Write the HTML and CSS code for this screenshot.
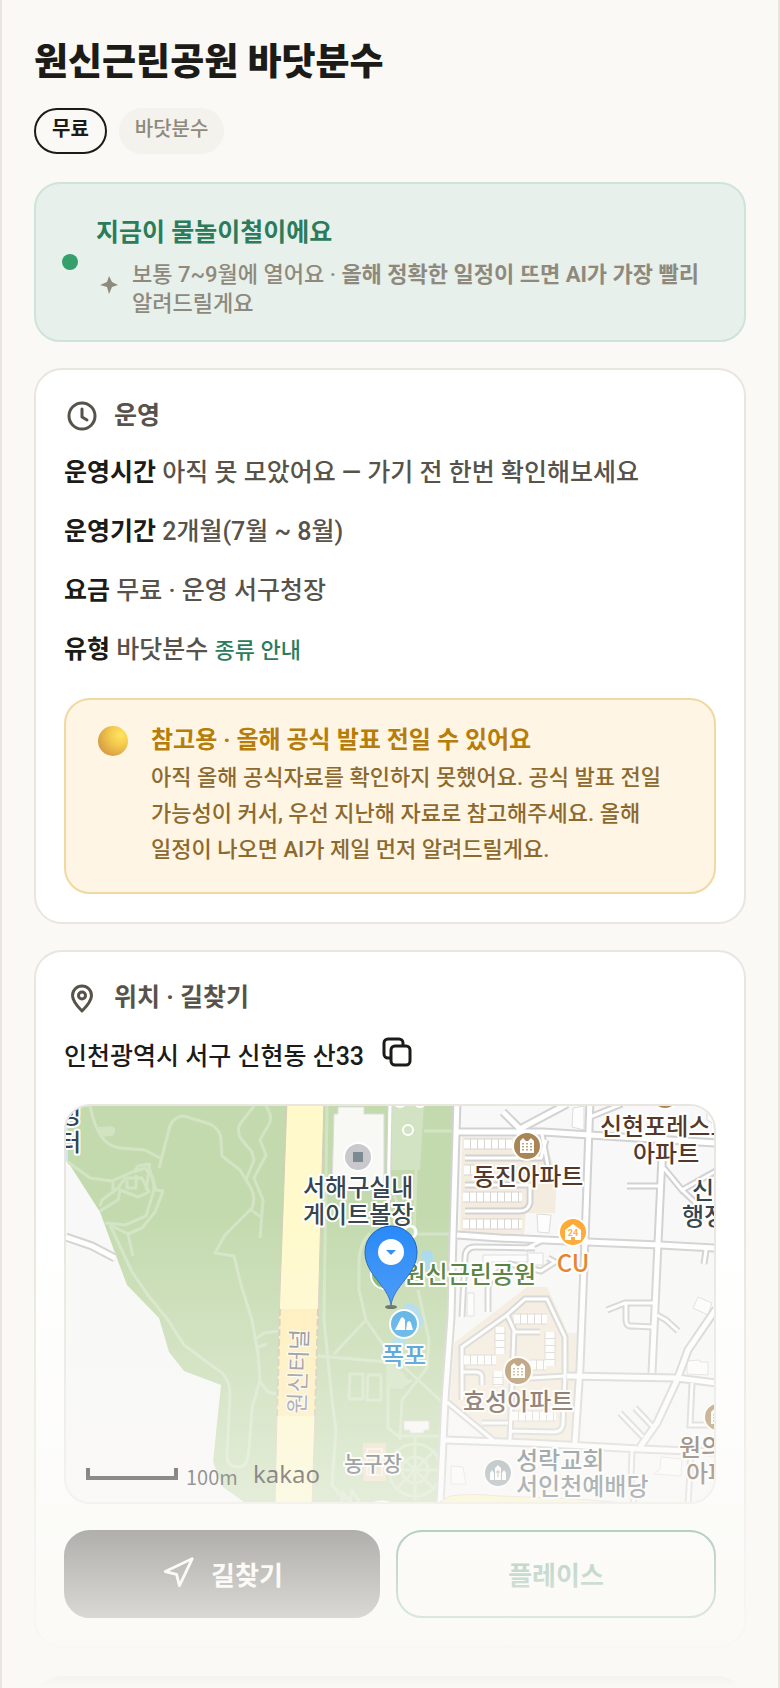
FILE: index.html
```html
<!DOCTYPE html>
<html lang="ko">
<head>
    <meta charset="UTF-8">
    <meta name="viewport" content="width=device-width, initial-scale=1.0">
    <title>원신근린공원 바닷분수</title>
    <link rel="stylesheet" href="styles.css">
</head>
<body>
    <main class="page">
        <h1 class="place-name">원신근린공원 바닷분수</h1>
        <div class="tags">
            <span class="tag tag-free">무료</span>
            <span class="tag">바닷분수</span>
        </div>

        <!-- Season notice -->
        <section class="season">
            <span class="dot"></span>
            <div class="season-body">
                <p class="season-title">지금이 물놀이철이에요</p>
                <div class="season-note">
                    <svg class="spark" viewBox="0 0 26 26"><path d="M13 4l3 6 6 3-6 2-3 7-2-7-7-2 7-3z"/></svg>
                    <p>보통 7~9월에 열어요 · <b>올해 정확한 일정이 뜨면 AI가 가장 빨리</b> 알려드릴게요</p>
                </div>
            </div>
        </section>

        <!-- Operation info -->
        <section class="card">
            <h2 class="card-title">
                <svg class="icon" viewBox="0 0 36 36"><circle cx="18" cy="18" r="13"/><path d="M18 11v8l5 3"/></svg>
                운영
            </h2>
            <div class="info">
                <p><b>운영시간</b> 아직 못 모았어요 — 가기 전 한번 확인해보세요</p>
                <p><b>운영기간</b> 2개월(7월 ~ 8월)</p>
                <p><b>요금</b> 무료 · 운영 서구청장</p>
                <p><b>유형</b> 바닷분수 <a href="#">종류 안내</a></p>
            </div>
            <div class="callout">
                <span class="ball"></span>
                <div>
                    <p class="callout-title">참고용 · 올해 공식 발표 전일 수 있어요</p>
                    <p class="callout-text">아직 올해 공식자료를 확인하지 못했어요. 공식 발표 전일 가능성이 커서, 우선 지난해 자료로 참고해주세요. 올해 일정이 나오면 AI가 제일 먼저 알려드릴게요.</p>
                </div>
            </div>
        </section>

        <!-- Location -->
        <section class="card">
            <h2 class="card-title">
                <svg class="icon" viewBox="0 0 36 36"><path d="M18 31C12 25 8.500 20.500 8.500 15.500a9.500 9.500 0 0 1 19 0C27.500 20.500 24 25 18 31z"/><circle cx="18" cy="15.500" r="3.500"/></svg>
                위치 · 길찾기
            </h2>
            <div class="address">
                <span>인천광역시 서구 신현동 산33</span>
                <button class="copy" type="button" aria-label="주소 복사">
                    <svg viewBox="0 0 30 30"><rect x="9" y="9" width="19" height="19" rx="4"/><path d="M9 21H6a4 4 0 0 1-4-4V6a4 4 0 0 1 4-4h11a4 4 0 0 1 4 4v3"/></svg>
                </button>
            </div>

            <div class="map">
                <svg viewBox="66 1106 648 396" preserveAspectRatio="xMidYMid slice">
                    <defs>
                        <g id="roads">
                            <path d="M457 1100L453 1235L451 1317L445 1400L440 1506"/>
                            <path d="M457 1132H543L590 1135L716 1143M457 1235L500 1238L587 1242L660 1245L716 1248"/>
                            <path d="M590 1100L585 1240L580 1367L575 1443M662 1157L658 1243L652 1373"/>
                            <path d="M567 1376L677 1378L716 1383M716 1309L688 1350L677 1380L657 1423L640 1447"/>
                            <path d="M445 1440L530 1443L640 1449L716 1452"/>
                            <path d="M503 1112L520 1129L567 1104"/>
                            <path d="M66 1237L92 1246L115 1258"/>
                        </g>
                        <g id="lanes">
                            <path d="M627 1186H660M663 1167L682 1190L716 1171M680 1188L703 1210M663 1140V1167M590 1117L622 1104"/>
                            <path d="M607 1310L625 1303H655M626 1303V1320Q626 1327 633 1326L653 1327M657 1315L666 1320L678 1331"/>
                            <path d="M620 1413L643 1437M635 1408L653 1427M632 1450L631 1480L634 1504M692 1383L690 1425H716M691 1450L688 1506M706 1250L704 1264"/>
                            <path d="M465 1158H541L546 1140M465 1185H530V1203Q528 1211 520 1211H465M542 1134L549 1172"/>
                            <path d="M535 1248L475 1247Q465 1247 465 1258L462 1317M541 1241L525 1249M488 1312V1290Q488 1282 494 1276L510 1264L541 1271L555 1262L548 1258"/>
                            <path d="M462 1400V1347L507 1315L525 1299H547L565 1337V1376L513 1379M507 1315L514 1330L510 1440M514 1332H540M462 1372H476Q482 1372 482 1378V1385M565 1376L563 1424Q562 1432 554 1432L511 1431M482 1423H508M447 1402L493 1440"/>
                        </g>
                        <g id="tower"><path d="M-7 7V-5L-4-8L-1-5H1L4-8L7-5V7z" fill="#fff"/><path d="M-4-3v9M0-3v9M4-3v9" stroke="currentColor" stroke-width="1.500" stroke-dasharray="1.500 1.500"/></g>
                    </defs>

                    <rect x="60" y="1100" width="660" height="410" fill="#f8f8f8"/>
                    <!-- park -->
                    <path fill="#cfe6f3" d="M60 1100h10v62h-10z"/>
                    <path fill="#c3daae" d="M68 1100H288L279 1320L275 1506H249L244 1502L223 1487L213 1462L221 1385L184 1371L169 1352L159 1318L127 1285L115 1253L100 1212L68 1162z"/>
                    <path fill="#c3daae" d="M324 1100H454L450 1317L443 1400L438 1506H312L318 1320z"/>
                    <path fill="#d1e3c2" d="M392 1104H424L420 1170H391z"/>
                    <g class="trail">
                        <path d="M90 1106Q98 1146 120 1148L145 1150L160 1158M159 1168L170 1126Q174 1116 184 1116L210 1124Q221 1130 221 1140L222 1156L240 1170L251 1188Q256 1198 252 1208L225 1235L215 1253L234 1256L241 1285L252 1320L258 1354L260 1380L252 1408L249 1450Q248 1467 238 1467Q227 1467 227 1455L230 1395Q230 1376 215 1368L184 1345L168 1320L148 1295L132 1272L110 1225"/>
                        <path d="M68 1162L90 1178L112 1181L130 1173L145 1168L153 1178L154 1190L146 1216L125 1225L105 1223"/>
                        <path d="M100 1206L102 1200L118 1188L125 1178L142 1178L149 1192L138 1197L120 1190L118 1200L100 1211M113 1181V1194M150 1163L146 1190M134 1172L138 1166L148 1164L156 1190L163 1191L155 1212L142 1228L128 1234L112 1226M128 1234L133 1256M127 1180V1188H136V1175"/>
                        <path d="M254 1106L240 1124Q236 1132 242 1140L252 1152L254 1160L246 1180M266 1106Q274 1118 268 1126L260 1140L266 1155L254 1178L263 1200L260 1238M251 1210L261 1217"/>
                        <path d="M254 1340L264 1333L278 1331M258 1347L267 1344M260 1382L268 1392L276 1394"/>
                        <path d="M327 1106L324 1320L332 1400L336 1430L332 1485L345 1500M424 1131H452M416 1170L414 1234H452M392 1190L402 1215M370 1233Q358 1245 359 1265V1290L366 1320L388 1352L442 1402M318 1356L388 1362M366 1320L334 1354M418 1290L429 1340L427 1368L402 1400L400 1440M388 1365V1428L398 1436H440M412 1380L398 1388"/>
                        <path d="M415 1436V1500M395 1450L435 1490M435 1450L395 1490M395 1470H440"/>
                        <circle cx="415" cy="1470" r="13"/><circle cx="415" cy="1470" r="26"/>
                        <path d="M341 1504L343 1492L350 1502L352 1490L360 1503"/>
                        <path d="M350 1374H363V1399H349zM368 1375H381V1400H367z"/>
                    </g>
                    <path fill="#d1e3c2" d="M98 1131q-3-5 4-4l8-1q6 1 5 6t-6 4l-8 1z"/>
                    <path fill="#cfe2c0" d="M388 1362L398 1367L409 1380L402 1389L386 1388z"/>
                    <path fill="#f8f8f5" stroke="#ddd" d="M334 1114H338V1107H364V1114H384V1190H332z"/>
                    <path fill="#f8f8f5" stroke="#ddd" d="M404 1421H429V1430H424V1433H410V1430H404z"/>
                    <path fill="#f0dcc0" d="M363 1443h23v38h-23z"/>
                    <path class="court" d="M367 1449h15v26h-15zM367 1462h15"/>
                    <path d="M390 1104L388 1210" stroke="#d5d5d5" stroke-width="5"/>
                    <path d="M390 1104L388 1210" stroke="#fff" stroke-width="3"/>
                    <g fill="#a6d8ec"><circle cx="427" cy="1256" r="6"/><path d="M422 1256l4 14 7-2v-12zM404 1306q8-6 14 2l6 14-6 8-20-16zM392 1340l12-4 2 10h-14z"/></g>
                    <g fill="none" stroke="#fff" stroke-width="2"><circle cx="408" cy="1130" r="5"/><circle cx="410" cy="1232" r="6" stroke-width="3"/><circle cx="400" cy="1101" r="6"/><circle cx="420" cy="1101" r="6"/></g>

                    <!-- tunnel road -->
                    <path fill="#fff9cb" stroke="#d6cbb8" d="M287 1100H324L318 1320L312 1506H275L279 1320z"/>
                    <path fill="#ffeeb5" d="M280 1309H318L315 1416H277z"/>
                    <path d="M280 1309L277 1416M318 1309L315 1416" stroke="#cfc6b4" stroke-width="2" stroke-dasharray="7 3"/>

                    <!-- apartment blocks -->
                    <path fill="#f4ecdf" d="M462 1137H544L557 1176L555 1213H526L524 1235H460z"/>
                    <path fill="#f4ebdc" d="M527 1287H547L568 1333H577L573 1443L512 1440H492L450 1405L454 1343z"/>
                    <g class="building">
                        <path d="M573 1108L584 1106V1130L572 1127zM537 1214L551 1215L549 1233L538 1232zM527 1253H543V1265H527zM698 1297L712 1303L708 1315L693 1308zM687 1361L700 1360V1362H708V1375L687 1374zM661 1457L682 1459L681 1476L654 1474L660 1469zM451 1466L463 1467L466 1484H451zM483 1255H528V1262H490V1275H483zM467 1293L474 1293V1316H467zM707 1106V1120L716 1125"/>
                    </g>
                    <use href="#lanes" class="lane-edge"/>
                    <use href="#roads" class="road-edge"/>
                    <use href="#lanes" class="lane-fill"/>
                    <use href="#roads" class="road-fill"/>
                    <g class="row-edge">
                        <path d="M464 1144H512M464 1170H486M463 1197H522M463 1224H522M514 1319H547M550 1332V1366M500 1327V1354M464 1360H496M530 1365H546M512 1416H556M498 1371V1386"/>
                    </g>
                    <g class="row-fill">
                        <path d="M464 1144H512M464 1170H486M463 1197H522M463 1224H522M514 1319H547M550 1332V1366M500 1327V1354M464 1360H496M530 1365H546M512 1416H556M498 1371V1386"/>
                    </g>
                    <path fill="#fdf6bd" stroke="#ddd6c8" d="M438 1503L450 1496Q470 1493 500 1496L577 1499L625 1503z"/>
                    <path fill="#fff" d="M370 1503Q382 1498 394 1503z"/>

                    <!-- place markers -->
                    <g class="poi">
                        <g transform="translate(358 1157)"><circle r="14" fill="#c9c8cd"/><path d="M-5-5h10v10H-5z" fill="#7c8a91"/></g>
                        <g transform="translate(527 1146)" color="#a98555"><circle r="14" fill="#a98555"/><use href="#tower"/></g>
                        <g transform="translate(518 1371)" color="#a98555"><circle r="14" fill="#a98555"/><use href="#tower"/></g>
                        <g transform="translate(718 1417)" color="#a98555"><circle r="14" fill="#a98555"/><use href="#tower"/></g>
                        <g transform="translate(665 1095)"><circle r="14" fill="#a98555"/></g>
                        <g transform="translate(573 1232)"><circle r="14" fill="#ffa931"/><path fill="#fff" d="M-8 8V-2L0-8L8-2V8H2V5H-2V8z"/><text y="4" class="poi-num">24</text></g>
                        <g transform="translate(385 1275)"><circle r="14" fill="#7eb35c"/></g>
                        <g transform="translate(404 1324)"><circle r="14" fill="#41a6e4"/><path fill="#fff" d="M-9 6L-3-6Q-1-8 1-4L1 6zM2 6L3-1Q5-5 7-1L9 6z"/></g>
                        <g transform="translate(498 1473)"><circle r="14" fill="#8b9aa1"/><path fill="#fff" d="M-8 7V0L-6-3L-4 0V7zM-3 7V-5L0-8L3-5V7zM4 7V0L6-3L8 0V7z"/><path d="M0-3V4M-2-1H2" stroke="#8b9aa1" stroke-width="1"/></g>
                    </g>

                    <g class="map-text">
                        <text x="81" y="1123" text-anchor="end">정</text>
                        <text x="81" y="1151" text-anchor="end">터</text>
                        <text x="303" y="1196">서해구실내</text>
                        <text x="303" y="1223">게이트볼장</text>
                        <text x="692" y="1199">신</text>
                        <text x="682" y="1225">행정</text>
                        <g fill="#54392b">
                            <text x="473" y="1185">동진아파트</text>
                            <text x="600" y="1135">신현포레스트</text>
                            <text x="633" y="1162">아파트</text>
                            <text x="463" y="1410">효성아파트</text>
                            <text x="679" y="1456">원의</text>
                            <text x="686" y="1482">아파</text>
                        </g>
                        <text x="573" y="1272" text-anchor="middle" fill="#e67817">CU</text>
                        <text x="536" y="1283" text-anchor="end" fill="#47742f">원신근린공원</text>
                        <text x="404" y="1364" text-anchor="middle" fill="#2389d0">폭포</text>
                        <text x="344" y="1471" class="small">농구장</text>
                        <g fill="#4a5b65">
                            <text x="516" y="1469">성락교회</text>
                            <text x="516" y="1495">서인천예배당</text>
                        </g>
                        <text transform="translate(305 1414) rotate(-88)" class="tunnel">원신터널</text>
                    </g>

                    <!-- pin -->
                    <ellipse cx="391" cy="1307" rx="6" ry="2" fill="#4d5a48"/>
                    <path fill="#2487f8" stroke="#1258bc" d="M391 1305C388 1285 365 1275 365 1252a26 26 0 0 1 52 0C417 1275 394 1285 391 1305z"/>
                    <circle cx="391" cy="1252" r="13" fill="#fff"/>
                    <path fill="#2487f8" d="M386 1250H396L391 1255z"/>

                    <path d="M88 1468V1478H176V1468" fill="none" stroke="#000" stroke-width="4"/>
                    <text x="186" y="1485" class="scale">100m</text>
                    <text x="253" y="1483" class="brand">kakao</text>
                </svg>
            </div>

            <div class="actions">
                <button class="btn btn-dark" type="button">
                    <svg viewBox="0 0 24 24"><path d="M3 11L22 2L13 21L11 13z"/></svg>
                    길찾기
                </button>
                <button class="btn btn-line" type="button">플레이스</button>
            </div>
        </section>

        <section class="more"></section>
        <div class="fade"></div>
    </main>
</body>
</html>
```

FILE: styles.css
```css
* {
    margin: 0;
    padding: 0;
    box-sizing: border-box;
}

body {
    font-family: Roboto, "Noto Sans CJK KR", sans-serif;
    background: #faf9f5;
    color: #1c1b17;
    word-break: keep-all;
}

.page {
    position: relative;
    display: flex;
    flex-direction: column;
    height: 100vh;
    overflow: hidden;
    padding: 36px 32px 0;
    border-left: 2px solid #e8e6df;
    border-right: 2px solid #e8e6df;
}

.page > * {
    flex-shrink: 0;
}

.place-name {
    font-size: 37px;
    line-height: 54px;
    font-weight: 800;
}

/* Tags */
.tags {
    display: flex;
    gap: 12px;
    margin-top: 18px;
}

.tag {
    height: 46px;
    padding: 6px 16px;
    border-radius: 23px;
    background: #f3f2ed;
    color: #8f897d;
    font-size: 20px;
    line-height: 30px;
    font-weight: 500;
}

.tag-free {
    padding: 4px 16px;
    border: 2px solid #1c1b17;
    background: none;
    color: #1c1b17;
    font-weight: 700;
}

/* Season notice */
.season {
    display: flex;
    align-items: center;
    gap: 18px;
    margin-top: 28px;
    padding: 26px 26px 22px;
    border: 2px solid #cfe4d8;
    border-radius: 26px;
    background: #e7f0ea;
}

.dot {
    width: 16px;
    height: 16px;
    margin-bottom: 4px;
    border-radius: 50%;
    background: #35a06c;
    flex-shrink: 0;
}

.season-title {
    font-size: 25px;
    line-height: 46px;
    font-weight: 700;
    color: #2c7c5b;
}

.season-note {
    display: flex;
    align-items: center;
    gap: 10px;
    margin-top: 4px;
    font-size: 22px;
    line-height: 29px;
    color: #8f897d;
}

.spark {
    width: 26px;
    height: 26px;
    margin-bottom: 8px;
    fill: #8f897d;
    flex-shrink: 0;
}

/* Cards */
.card {
    margin-top: 26px;
    padding: 28px;
    border: 2px solid #e8e6df;
    border-radius: 28px;
    background: #fff;
}

.card-title {
    display: flex;
    align-items: center;
    gap: 14px;
    font-size: 25px;
    line-height: 36px;
    font-weight: 700;
    color: #57534a;
}

.icon {
    width: 36px;
    height: 36px;
    fill: none;
    stroke: #57534a;
    stroke-width: 3;
    stroke-linecap: round;
    stroke-linejoin: round;
}

.info {
    display: flex;
    flex-direction: column;
    gap: 17px;
    margin-top: 18px;
    font-size: 25px;
    line-height: 42px;
    color: #57534a;
}

.info b {
    color: #1c1b17;
}

.info a {
    font-size: 22px;
    color: #2c7c5b;
    text-decoration: none;
}

.callout {
    display: flex;
    gap: 22px;
    margin-top: 26px;
    padding: 22px 46px 24px 32px;
    border: 2px solid #f0d9a0;
    border-radius: 26px;
    background: #fff5e4;
}

.ball {
    width: 30px;
    height: 30px;
    margin: 4px 1px 0 0;
    border-radius: 50%;
    background: radial-gradient(circle at 75% 30%, #ffe55e, #f3c94e 35%, #dba544 70%, #d08a58);
    flex-shrink: 0;
}

.callout-title {
    margin-bottom: 2px;
    font-size: 24px;
    line-height: 36px;
    font-weight: 700;
    color: #b67d0a;
}

.callout-text {
    font-size: 22px;
    line-height: 36px;
    color: #8c6a2e;
}

/* Location */
.address {
    display: flex;
    align-items: center;
    gap: 18px;
    margin-top: 20px;
    font-size: 25px;
    line-height: 42px;
}

.info,
.season-note,
.callout-text,
.address {
    font-weight: 500;
}

.copy {
    width: 30px;
    height: 42px;
    padding-bottom: 10px;
    border: none;
    background: none;
    display: flex;
    align-items: center;
    cursor: pointer;
}

.copy svg {
    width: 30px;
    height: 30px;
    fill: none;
    stroke: #1c1b17;
    stroke-width: 3;
}

.map {
    margin-top: 26px;
    border: 2px solid #e8e6df;
    border-radius: 26px;
    overflow: hidden;
}

.map svg {
    display: block;
    width: 100%;
}

.trail {
    fill: none;
    stroke: #d3e4c5;
    stroke-width: 3;
    stroke-linejoin: round;
}

.court {
    fill: none;
    stroke: #f6eee2;
    stroke-width: 2;
}

.building {
    fill: #fdfdfd;
    stroke: #dcdcdc;
}

.road-edge, .lane-edge {
    fill: none;
    stroke: #d2d2d2;
    stroke-width: 9;
}

.road-fill, .lane-fill {
    fill: none;
    stroke: #fff;
    stroke-width: 5;
}

.lane-edge {
    stroke-width: 7;
}

.lane-fill {
    stroke-width: 3;
}

.row-edge {
    stroke: #d8d5d0;
    stroke-width: 11;
}

.row-fill {
    stroke: #fff;
    stroke-width: 9;
    stroke-dasharray: 6 1;
}

.poi circle {
    stroke: #fff;
    stroke-width: 2;
}

.poi-num {
    font-size: 9px;
    font-weight: 700;
    text-anchor: middle;
    fill: #ffab38;
}

.map-text {
    font-family: "Noto Sans CJK KR", sans-serif;
    font-size: 24px;
    font-weight: 500;
    fill: #36454f;
    stroke: #fff;
    stroke-width: 4;
    stroke-linejoin: round;
    paint-order: stroke;
}

.map-text .small {
    font-size: 21px;
    fill: #3c464d;
}

.map-text .tunnel {
    font-size: 23px;
    font-weight: 400;
    fill: #858286;
    stroke-width: 2;
}

.scale {
    font-family: "Noto Sans CJK KR", sans-serif;
    font-size: 20px;
    font-weight: 400;
    fill: #111;
}

.brand {
    font-family: "Noto Sans", sans-serif;
    font-size: 24px;
    font-weight: 400;
    fill: #000;
}

.actions {
    display: grid;
    grid-template-columns: 79fr 80fr;
    gap: 16px;
    margin-top: 26px;
}

.btn {
    display: flex;
    align-items: center;
    justify-content: center;
    gap: 16px;
    height: 88px;
    padding-bottom: 2px;
    border: 2px solid #1c1b17;
    border-radius: 26px;
    font-family: inherit;
    font-size: 26px;
    font-weight: 700;
    cursor: pointer;
}

.btn-dark {
    background: #1c1b17;
    color: #fff;
}

.btn-dark svg {
    width: 34px;
    height: 34px;
    fill: none;
    stroke: #fff;
    stroke-width: 2;
    stroke-linejoin: round;
}

.btn-line {
    border-color: #2c7c5b;
    background: #fff;
    color: #2c7c5b;
}

.more {
    height: 200px;
    margin-top: 28px;
    border-radius: 28px;
    background: #1c1b17;
}

/* Content fades out toward the bottom of the screen */
.fade {
    position: absolute;
    left: 0;
    right: 0;
    bottom: 0;
    height: 28vh;
    background: linear-gradient(rgba(250, 249, 245, 0), #faf9f5);
    pointer-events: none;
}
```
